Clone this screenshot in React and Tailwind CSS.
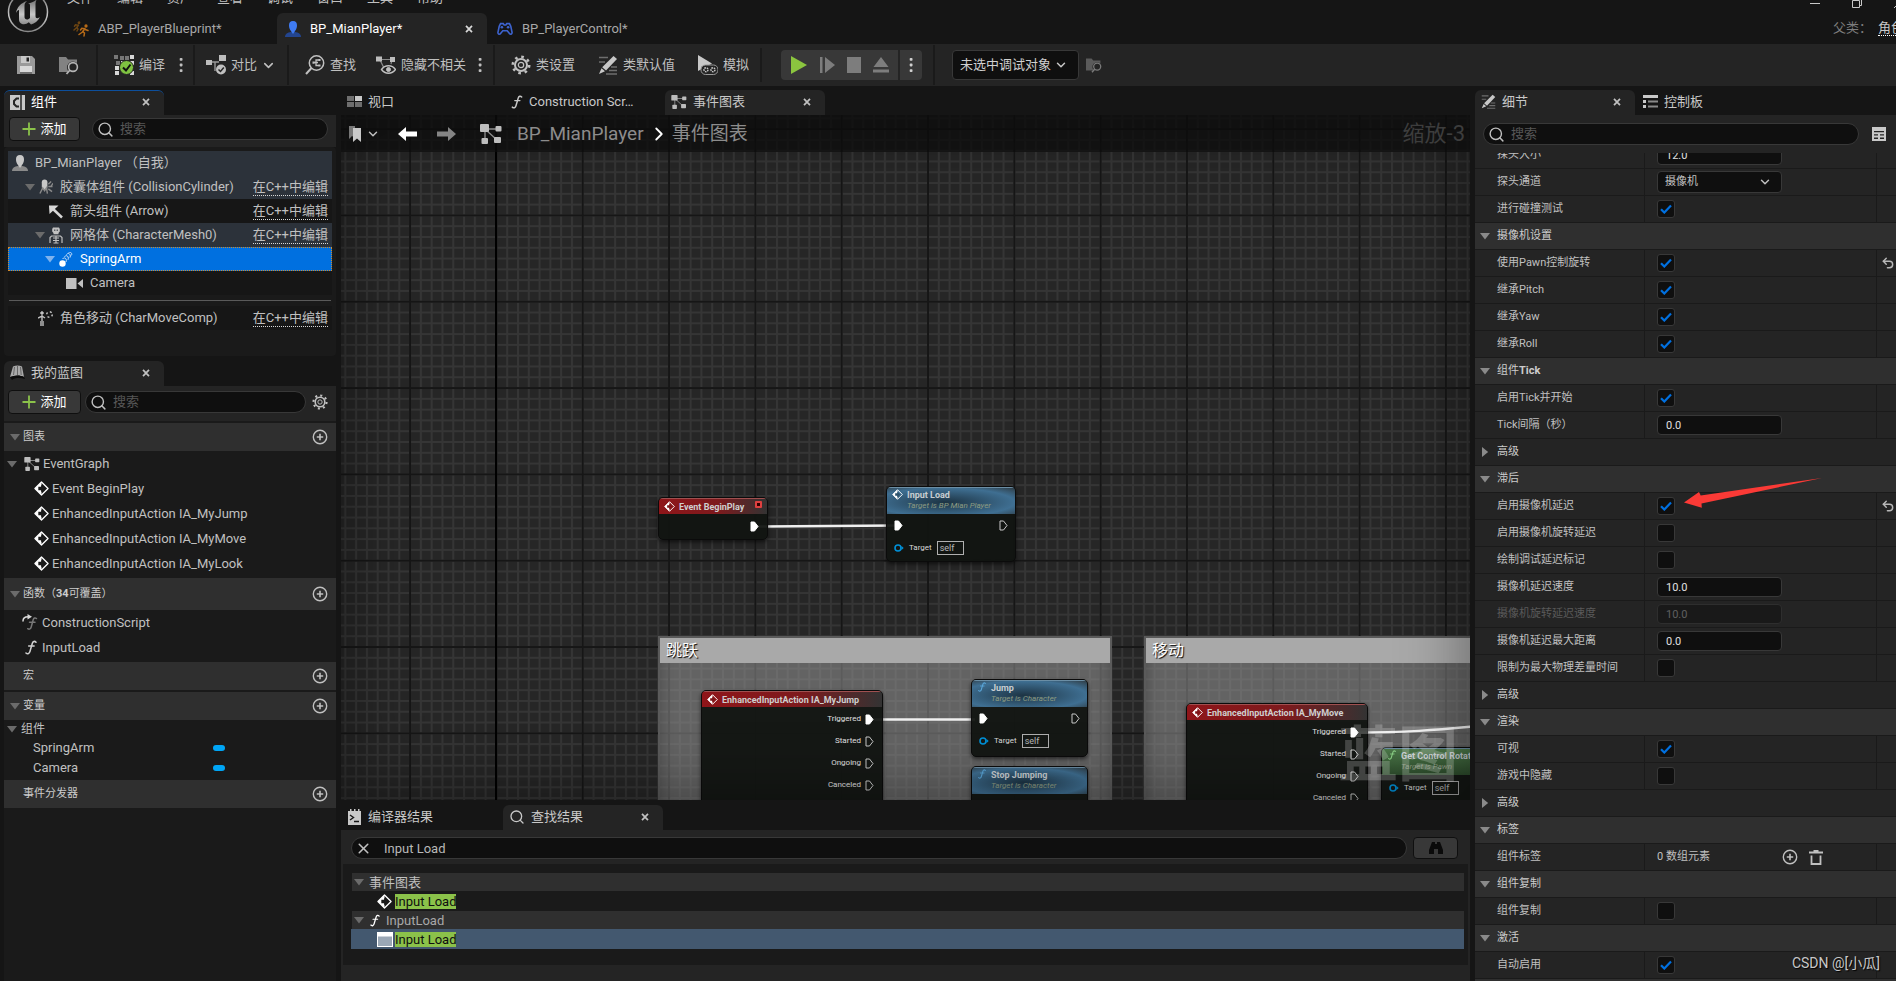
import React from "react";
import { Search, ChevronDown, ChevronRight, X, Undo2 } from "lucide-react";

/* ---------- small icons ---------- */

const CloseX = ({ className = "" }) => (
  <svg viewBox="0 0 8 8" className={"h-2 w-2 " + className} fill="none" stroke="currentColor" strokeWidth="1.7">
    <path d="M1 .8 7 7.2M7 .8 1 7.2" />
  </svg>
);

const Tri = ({ open = true, className = "text-[#6b6b6b]" }) => (
  <svg viewBox="0 0 10 10" className={"h-[10px] w-[10px] shrink-0 " + className} fill="currentColor">
    {open ? <path d="M0 2h10L5 8.4z" /> : <path d="M2 0v10l6.2-5z" />}
  </svg>
);

const Plus = () => (
  <svg viewBox="0 0 14 14" className="h-[14px] w-[14px]" stroke="#8bc24a" strokeWidth="1.8">
    <path d="M7 .5v13M.5 7h13" />
  </svg>
);

const CirclePlus = () => (
  <svg viewBox="0 0 16 16" className="h-4 w-4" fill="none" stroke="#c0c0c0">
    <circle cx="8" cy="8" r="6.7" strokeWidth="1.4" />
    <path d="M8 4.8v6.4M4.8 8h6.4" strokeWidth="1.6" />
  </svg>
);

const Dots = ({ className = "text-[#c0c0c0]" }) => (
  <svg viewBox="0 0 4 16" className={"h-4 w-1 " + className} fill="currentColor">
    <rect x=".7" y="1" width="2.8" height="2.8" rx=".8" />
    <rect x=".7" y="6.6" width="2.8" height="2.8" rx=".8" />
    <rect x=".7" y="12.2" width="2.8" height="2.8" rx=".8" />
  </svg>
);

const GraphIcon = ({ className = "h-[14px] w-[16px]" }) => (
  <svg viewBox="0 0 22 20" className={"shrink-0 " + className} fill="#bdbdbd" stroke="#bdbdbd">
    <path d="M5 5h12M5 5v11M6 6l11 10" fill="none" strokeWidth="1.3" stroke="#8f8f8f" />
    <g stroke="none">
      <rect x="0" y="0" width="9" height="8" rx="1" />
      <rect x="15.5" y="2" width="6" height="5.5" rx="1" />
      <rect x="14" y="13" width="7" height="6" rx="1" />
      <rect x="1.5" y="14" width="6.5" height="6" rx="1" />
    </g>
  </svg>
);

const EventIcon = ({ className = "h-[15px] w-[15px]", hole = "#1a1a1a" }) => (
  <svg viewBox="0 0 16 16" className={"shrink-0 " + className}>
    <path d="M8 1 15 8 8 15 1 8z" fill="none" stroke="#fff" strokeWidth="1.4" strokeLinejoin="round" />
    <path d="M8 1v14L1 8z" fill="#fff" />
    <path d="M4.6 6.2H7.6V3.9L11.4 8l-3.8 4.1V9.8h-3z" fill={hole} />
  </svg>
);

const FnIcon = ({ className = "h-[15px] w-[12px] text-[#d0d0d0]" }) => (
  <svg viewBox="0 0 12 15" className={"shrink-0 " + className} fill="none" stroke="currentColor" strokeWidth="1.6" strokeLinecap="round">
    <path d="M11 2.2C9.6.7 7.9 1.2 7.3 3.4L4.9 11.6C4.3 13.6 2.7 14.5 1 13" />
    <path d="M3.6 6h5.6" strokeWidth="1.3" />
  </svg>
);

const OverrideFnIcon = () => (
  <svg viewBox="0 0 16 17" className="h-[17px] w-4 shrink-0" fill="none" strokeLinecap="round">
    <path d="M1 7c0-3 2-4.3 5-4.3" stroke="#d8d8d8" strokeWidth="1.5" />
    <path d="M5.5 0 10 2.7 5.500 5.500z" fill="#d8d8d8" />
    <path d="M14.5 4.500c-1.500-1.200-2.800-.5-3.300 1.300l-2 7.200c-.5 1.800-1.800 2.800-3.500 1.700M7.500 8.300h5.500" stroke="#777" strokeWidth="1.5" />
  </svg>
);

const GearIcon = ({ className = "h-5 w-5" }) => (
  <svg viewBox="0 0 20 20" className={"shrink-0 " + className} fill="none" stroke="#c0c0c0">
    <circle cx="10" cy="10" r="6" strokeWidth="2" />
    <circle cx="10" cy="10" r="2.7" strokeWidth="1.2" />
    <circle cx="10" cy="10" r="8.2" strokeWidth="2.6" strokeDasharray="2.6 3.84" />
  </svg>
);

const PencilIcon = ({ className = "h-5 w-5" }) => (
  <svg viewBox="0 0 20 20" className={"shrink-0 " + className}>
    <path d="M1 2.5h9M1 7h6M13 12h6M11 15.5h8M8 19h11" stroke="#6e6e6e" strokeWidth="1.5" />
    <path d="M15.5 1 19 4 8 15.5 4.2 12.2z" fill="#c8c8c8" />
    <path d="M3.5 13.2 7 16.3 1 19z" fill="#c8c8c8" />
  </svg>
);

const PersonIcon = ({ head, body, className = "h-4 w-4" }) => (
  <svg viewBox="0 0 16 16" className={"shrink-0 " + className}>
    <path d="M0 16c0-3 2.5-4.5 6-5h4c3.5.5 6 2 6 5z" fill={body} />
    <path d="M8 0c2.8 0 4.2 2 4 4.8C11.8 8 10.2 10.8 8 10.8S4.200 8 4 4.8C3.800 2 5.200 0 8 0z" fill={head} />
    <path d="M6 10h4l-2 3z" fill={head} />
  </svg>
);

const UnrealLogo = () => (
  <svg viewBox="0 0 42 42" className="h-[42px] w-[42px]">
    <defs>
      <linearGradient id="ue" x1="0" y1="0" x2="0" y2="1">
        <stop offset="0" stopColor="#6f6f6f" />
        <stop offset=".6" stopColor="#c9c9c9" />
        <stop offset="1" stopColor="#8a8a8a" />
      </linearGradient>
    </defs>
    <circle cx="21" cy="21" r="19.5" fill="#161616" stroke="url(#ue)" strokeWidth="1.5" />
    <path
      d="M9 22c1-6 5-10 11-12-2 1.500-2.500 3-2.500 5v11c0 1.500 1 2.500 2.500 2.500 1.200 0 2.300-.6 3-1.500V14.500c0-1.500-.8-2-2-2.200 3-.3 7-1.800 9-4.300-1.300 2-1.500 4-1.500 6v11c0 1.500.6 2.200 1.800 2.200 1 0 2-.5 2.700-1.200C31 30 27.500 32.500 24 33.500l-2.200-2.200C20 33 17.500 33.700 15 33c-2-.7-3-2.200-3-4.500v-9c0-1.200-1.800-.2-3 2.500z"
      fill="url(#ue)"
    />
  </svg>
);

const RunnerIcon = () => (
  <svg viewBox="0 0 16 16" className="h-4 w-4" fill="none" strokeWidth="1.5" strokeLinecap="round">
    <g stroke="#6d4512">
      <circle cx="6" cy="1.8" r=".7" />
      <path d="M5.5 4 3.8 6.5 5 8 4 10M3.5 6.800 1 9M5 4.200 2.500 3.800 1.500 5.200" />
    </g>
    <g stroke="#b96c18">
      <circle cx="13" cy="5" r=".9" />
      <path d="M12 7.5 9.8 10.5 11.5 12 11 15M9.500 11 6 13.500M12 7.700 8.800 7.200 7.500 9M12.200 8.500 15 9.500" />
    </g>
  </svg>
);

const PadIcon = () => (
  <svg viewBox="0 0 18 14" className="h-[14px] w-[16px]">
    <path d="M4 1h3l1 1.500h2L11 1h3l1.500 3L17 11c0 2-2 2.500-3 1L11.500 9h-5L4 12c-1 1.500-3 1-3-1l1.500-7z" fill="none" stroke="#3d63cf" strokeWidth="1.8" />
    <circle cx="5.5" cy="5" r="1.5" fill="#3d63cf" />
    <circle cx="12.5" cy="5" r="1.5" fill="#3d63cf" />
  </svg>
);

const FolderFind = ({ className = "h-[20px] w-[20px] text-[#b5b5b5]" }) => (
  <svg viewBox="0 0 20 20" className={className}>
    <path d="M0 2h7l2 2.500h9V8a6 6 0 0 0-8 9H0z" fill="currentColor" opacity=".65" />
    <circle cx="14" cy="12" r="4.4" fill="#242424" stroke="currentColor" strokeWidth="1.6" />
    <path d="m11 15-3.500 4" stroke="currentColor" strokeWidth="1.8" />
  </svg>
);

/* ---------- controls ---------- */

function AddButton({ className = "" }) {
  return (
    <button className={"flex items-center justify-center gap-1 rounded border border-[#0f0f0f] bg-[#383838] text-[13px] leading-4 text-white " + className}>
      <Plus />
      添加
    </button>
  );
}

function SearchBox({ className = "", label }) {
  return (
    <label className={"flex h-[22px] items-center gap-1 rounded-full border border-[#383838] bg-[#0f0f0f] pl-1 " + className}>
      <Search className="h-[17px] w-[17px] shrink-0 text-[#c0c0c0]" strokeWidth={2} />
      <input type="text" aria-label={label} placeholder="搜索" className="h-full min-w-0 flex-1 bg-transparent pb-[2px] pl-[2px] text-[13px] leading-4 outline-none placeholder:text-[#575757]" />
    </label>
  );
}

function PanelTab({ icon, children, active, focus, width = "w-[160px]" }) {
  return (
    <div className={"flex h-[25px] shrink-0 items-center rounded-t-md px-[6px] pb-[2px] " + width + (active ? " bg-[#242424]" : "") + (focus ? " border-t border-[#0d4f9c]" : "")}>
      <button className="flex min-w-0 flex-1 items-center gap-[6px] text-left text-[13px] leading-4 whitespace-nowrap text-[#c8c8c8]">
        {icon}
        {children}
      </button>
      {active && (
        <button aria-label="关闭" className="mr-2 text-[#c0c0c0]">
          <CloseX />
        </button>
      )}
    </div>
  );
}

/* ---------- top ---------- */

const MENUS = ["文件", "编辑", "资产", "查看", "调试", "窗口", "工具", "帮助"];

function TopBar() {
  return (
    <header className="flex h-[44px] shrink-0 items-start">
      <div className="-mt-[9px] ml-[7px] w-[60px] shrink-0">
        <UnrealLogo />
      </div>
      <div className="flex min-w-0 flex-1 flex-col">
        <nav className="-mt-[10px] flex h-[23px] shrink-0 gap-6 text-[13px] leading-4 text-[#c0c0c0]">
          {MENUS.map((m) => (
            <button key={m} className="h-4">
              {m}
            </button>
          ))}
        </nav>
        <div className="flex h-[31px] text-[13px] leading-4 text-[#a8a8a8]">
          <button className="flex w-[210px] items-center gap-[9px] pl-[6px] whitespace-nowrap">
            <RunnerIcon />
            ABP_PlayerBlueprint*
          </button>
          <div className="flex w-[210px] items-center rounded-t-md bg-[#242424] pr-[14px] pl-2">
            <button className="flex flex-1 items-center gap-[9px] text-white">
              <PersonIcon head="#3f7bf2" body="#23458f" />
              BP_MianPlayer*
            </button>
            <button aria-label="关闭" className="text-[#d8d8d8]">
              <CloseX />
            </button>
          </div>
          <button className="flex items-center gap-[9px] pl-[10px] whitespace-nowrap">
            <PadIcon />
            BP_PlayerControl*
          </button>
        </div>
      </div>
      <div className="flex w-[90px] shrink-0 flex-col overflow-hidden">
        <div className="flex h-[18px] items-start gap-8 pl-1 text-[#c8c8c8]">
          <svg viewBox="0 0 10 8" className="h-2 w-[10px] shrink-0" stroke="currentColor">
            <path d="M0 3.500h10" />
          </svg>
          <svg viewBox="0 0 10 8" className="h-2 w-[10px] shrink-0" fill="none" stroke="currentColor">
            <path d="M.5 .5v7h7v-7zM9.500 0v5.500h-2" />
          </svg>
          <svg viewBox="0 0 10 8" className="h-2 w-[10px] shrink-0" stroke="currentColor">
            <path d="M0 8 8 0" />
          </svg>
        </div>
        <div className="flex pl-[27px] text-[13px] leading-5 whitespace-nowrap text-[#7d7d7d]">
          <span className="w-[45px] shrink-0">父类：</span>
          <a href="#parent" className="h-[18px] border-b border-dotted border-white text-[#c8c8c8]">
            角色
          </a>
        </div>
      </div>
    </header>
  );
}

const Divider = ({ className = "h-[40px]" }) => <span className={"w-[2px] shrink-0 bg-[#1a1a1a] " + className} />;

function ToolButton({ icon, children, className = "" }) {
  return (
    <button className={"flex shrink-0 items-center gap-[5px] text-[13px] leading-4 whitespace-nowrap text-[#c0c0c0] " + className}>
      {icon}
      {children}
    </button>
  );
}

function Toolbar() {
  return (
    <div className="flex h-[42px] shrink-0 items-center bg-[#242424]">
      <div className="flex w-[96px] shrink-0 items-center gap-6 pl-[17px]">
        <button aria-label="保存">
          <svg viewBox="0 0 18 18" className="h-[18px] w-[18px]">
            <path d="M0 0h15l3 3v15H0z" fill="#9a9a9a" />
            <path d="M4 0h9v7H4z" fill="#c8c8c8" />
            <path d="M9.500 1.500H12v4H9.500z" fill="#242424" />
            <path d="M3 10h12v6H3z" fill="#d8d8d8" />
            <path d="M3 16h12v2H3z" fill="#6e6e6e" />
          </svg>
        </button>
        <button aria-label="浏览">
          <FolderFind />
        </button>
      </div>
      <Divider />
      <div className="flex w-[95px] shrink-0 items-center gap-[14px] pl-4">
        <ToolButton
          icon={
            <svg viewBox="0 0 20 20" className="h-5 w-5">
              <g fill="#777">
                <path d="M0 0h4v4H0zM6 1h4v4H6zM11 1h4v4h-4zM2 6h4v4H2z" />
              </g>
              <g fill="#d8d8d8">
                <path d="M16 0h4v4h-4zM16 6h4v4h-4zM1 11h4v4H1zM1 16h4v4H1zM7 6h3v3H7zM16 16h4v4h-4z" />
              </g>
              <circle cx="12.5" cy="12.5" r="7" fill="#7fc241" stroke="#242424" />
              <path d="m9 12.500 3 3 4.500-6" fill="none" stroke="#111" strokeWidth="2" />
            </svg>
          }
        >
          编译
        </ToolButton>
        <button aria-label="编译选项">
          <Dots />
        </button>
      </div>
      <Divider />
      <div className="flex w-[92px] shrink-0 items-center pl-[11px]">
        <ToolButton
          icon={
            <svg viewBox="0 0 20 20" className="h-5 w-5">
              <path d="M4 7h9M9 7v9" stroke="#9a9a9a" strokeWidth="1.4" fill="none" />
              <path d="M0 5h6v5H0zM13 0h7v6h-7zM12 2h8" fill="#bdbdbd" />
              <circle cx="15" cy="14.5" r="5" fill="#c0c0c0" />
              <path d="m12.500 14.500 2 2 3.300-4" stroke="#242424" strokeWidth="1.5" fill="none" />
            </svg>
          }
        >
          对比
          <ChevronDown className="-ml-px h-[15px] w-[15px]" strokeWidth={2.5} />
        </ToolButton>
      </div>
      <Divider />
      <div className="flex w-[204px] shrink-0 items-center pl-4">
        <ToolButton
          className="w-[71px]"
          icon={
            <svg viewBox="0 0 20 20" className="h-5 w-5" fill="none" stroke="#c0c0c0">
              <circle cx="11.5" cy="8" r="7.2" strokeWidth="1.5" />
              <path d="m6.500 13-5.500 6" strokeWidth="2" />
              <path d="M9 7.500h4M11 7.500v3h3M11 7.500v-2.500h3" strokeWidth="1.3" />
              <path d="M7.500 6.500h2v2.200h-2zM13.500 4h2v2h-2zM13.500 9.500h2v2h-2z" fill="#c0c0c0" stroke="none" />
            </svg>
          }
        >
          查找
        </ToolButton>
        <ToolButton
          className="w-[102px]"
          icon={
            <svg viewBox="0 0 20 20" className="h-5 w-5" fill="none" stroke="#c0c0c0">
              <path d="M3 4.500h13M4 5l4 8M16 5l-1 4" strokeWidth="1.2" stroke="#8a8a8a" />
              <path d="M0 1.500h6v5H0zM14 2h5v5h-5z" fill="#bdbdbd" stroke="none" />
              <path d="M5.500 14.500c3.500-5 10.500-5 14 0-3.500 5-10.500 5-14 0z" strokeWidth="1.4" fill="#242424" />
              <circle cx="12.5" cy="14.5" r="2" fill="#c0c0c0" />
            </svg>
          }
        >
          隐藏不相关
        </ToolButton>
        <button aria-label="隐藏选项">
          <Dots />
        </button>
      </div>
      <Divider />
      <div className="flex w-[265px] shrink-0 items-center pl-4">
        <ToolButton className="w-[87px]" icon={<GearIcon />}>
          类设置
        </ToolButton>
        <ToolButton className="w-[100px]" icon={<PencilIcon />}>
          类默认值
        </ToolButton>
        <ToolButton
          icon={
            <svg viewBox="0 0 20 20" className="h-5 w-5">
              <path d="M0 0 14 8.500 0 16z" fill="#c8c8c8" />
              <rect x="3" y="10" width="17" height="9.5" rx="4.5" fill="#242424" stroke="#9a9a9a" strokeWidth="1" />
              <circle cx="8" cy="14.7" r="2" fill="none" stroke="#c8c8c8" strokeWidth="1.5" strokeDasharray="1.5 .8" />
              <circle cx="15" cy="14.7" r="2" fill="none" stroke="#c8c8c8" strokeWidth="1.5" strokeDasharray="1.5 .8" />
            </svg>
          }
        >
          模拟
        </ToolButton>
      </div>
      <Divider className="h-[34px]" />
      <div className="flex w-[171px] shrink-0 items-center pl-[19px]">
        <div className="flex h-[30px] items-center rounded bg-[#383838]">
          <div className="flex h-full w-[119px] items-center gap-3 border-r-2 border-[#242424] pl-[10px] text-[#7d7d7d]">
            <button aria-label="播放">
              <svg viewBox="0 0 16 18" className="h-[18px] w-4">
                <path d="M0 0 16 9 0 18z" fill="#8bc53f" />
              </svg>
            </button>
            <button aria-label="单步">
              <svg viewBox="0 0 16 16" className="h-4 w-4" fill="currentColor">
                <path d="M1 0h2.500v16H1zM6 0l10 8-10 8z" />
              </svg>
            </button>
            <button aria-label="停止" className="h-4 w-[14px] bg-[#7d7d7d]" />
            <button aria-label="弹出">
              <svg viewBox="0 0 16 16" className="h-4 w-4" fill="currentColor">
                <path d="M8 0l7.500 10H.5zM0 12.500h16V15.500H0z" />
              </svg>
            </button>
          </div>
          <button aria-label="播放选项" className="flex w-[22px] justify-center">
            <Dots className="text-[#d0d0d0]" />
          </button>
        </div>
      </div>
      <Divider />
      <div className="ml-[17px] grid w-[127px] shrink-0 items-center rounded border border-[#383838] bg-[#0f0f0f]">
        <select aria-label="调试对象" className="col-start-1 row-start-1 h-[28px] appearance-none bg-transparent pl-[7px] text-[13px] leading-4 text-[#d0d0d0] outline-none">
          <option>未选中调试对象</option>
        </select>
        <ChevronDown className="pointer-events-none col-start-1 row-start-1 mr-[10px] h-[14px] w-[14px] justify-self-end text-[#c8c8c8]" strokeWidth={2.5} />
      </div>
      <button aria-label="定位调试对象" className="ml-[7px]">
        <FolderFind className="h-4 w-4 text-[#7a7a7a]" />
      </button>
    </div>
  );
}

/* ---------- left ---------- */

const EditCpp = () => (
  <a href="#edit-cpp" className="ml-auto border-b border-dotted border-[#d8d8d8] text-[13px] leading-4 text-[#c0c0c0]">
    在C++中编辑
  </a>
);

function TreeRow({ indent, open, icon, children, cpp, tone = "", triTone = "text-[#6b6b6b]" }) {
  return (
    <li className={"flex h-6 items-center gap-[7px] pr-1 text-[13px] leading-4 whitespace-nowrap text-[#c0c0c0] " + indent + " " + tone}>
      {open && <Tri className={"-mr-[3px] " + triTone} />}
      {icon}
      <span>{children}</span>
      {cpp && <EditCpp />}
    </li>
  );
}

function ComponentsPanel() {
  return (
    <section>
      <div className="flex pt-1">
        <PanelTab
          active
          focus
          icon={
            <svg viewBox="0 0 15 15" className="h-[15px] w-[15px]">
              <path d="M0 0h15v15H0z" fill="#c8c8c8" />
              <path d="M9 3.500H6.500L4 6v3l2.500 2.500H9" fill="none" stroke="#242424" strokeWidth="2" />
              <path d="M11 0v15" stroke="#242424" strokeWidth="1.5" />
            </svg>
          }
        >
          <span className="text-white">组件</span>
        </PanelTab>
      </div>
      <div className="flex h-[32px] items-start gap-3 bg-[#242424] pt-[2px] pr-2 pl-[5px]">
        <AddButton className="h-[24px] w-[71px]" />
        <SearchBox label="搜索组件" className="mt-px flex-1" />
      </div>
      <div className="rounded bg-[#1a1a1a] px-1 pt-1 pb-[26px]">
        <ul>
          <TreeRow indent="pl-1" tone="bg-[#2c323a]" icon={<PersonIcon head="#c8c8c8" body="#8a8a8a" />}>
            BP_MianPlayer （自我）
          </TreeRow>
          <TreeRow
            indent="pl-[17px]"
            open
            cpp
            tone="bg-[#2c323a]"
            icon={
              <svg viewBox="0 0 15 16" className="h-4 w-[14px] shrink-0">
                <rect x="3" y="0" width="6" height="11" rx="3" fill="#c8c8c8" />
                <path d="M1 15 4 9l2 3 2-3 1 6M10 5l3-3M10 7.500h4.500M10 10l4 3M13 7l2-3" stroke="#8a8a8a" strokeWidth="1.5" fill="none" />
              </svg>
            }
          >
            胶囊体组件 (CollisionCylinder)
          </TreeRow>
          <TreeRow
            indent="pl-[40px]"
            cpp
            tone="bg-[#161616]"
            icon={
              <svg viewBox="0 0 15 15" className="h-[15px] w-[15px] shrink-0">
                <path d="m5 5 9 8.500" stroke="#d8d8d8" strokeWidth="2.5" />
                <path d="M1 1.500h9.500L1.500 10z" fill="#d8d8d8" />
              </svg>
            }
          >
            箭头组件 (Arrow)
          </TreeRow>
          <TreeRow
            indent="pl-[27px]"
            open
            cpp
            tone="bg-[#2c323a]"
            icon={
              <svg viewBox="0 0 14 17" className="h-[17px] w-[14px] shrink-0" fill="none" stroke="#c0c0c0">
                <path d="M4 .5h6l.8 1.500v2.500L9.500 6v1.200h-5V6L3.200 4.500V2z" fill="#c0c0c0" stroke="none" />
                <path d="M5.300 3.200h1M7.700 3.200h1" stroke="#2c323a" strokeWidth="1.6" />
                <path d="M1 16v-5.500l1.500-1.500h9l1.500 1.500V16M4 11h6M4 13.500h6M4.500 16h5M7 9v7" strokeWidth="1.2" />
              </svg>
            }
          >
            网格体 (CharacterMesh0)
          </TreeRow>
          <TreeRow
            indent="pl-[37px]"
            open
            triTone="text-[#7fb3ee]"
            tone="bg-[#0070e0] outline-1 -outline-offset-1 outline-dotted outline-[#d08a2c]"
            icon={
              <svg viewBox="0 0 14 15" className="h-[15px] w-[14px] shrink-0" fill="none">
                <path d="M3.500 7c1.500-2.500 5-.5 3.500 3M5.500 4.800c1.500-2.500 5-.5 3.500 3M7.500 2.600c1.500-2.500 5-.5 3.500 3M9.500.8c1.500-1.500 4 0 3 2.500" stroke="#cfe2f8" strokeWidth="1" />
                <circle cx="3.5" cy="11.5" r="3.2" fill="#fff" />
              </svg>
            }
          >
            <span className="text-white">SpringArm</span>
          </TreeRow>
          <TreeRow
            indent="pl-[58px]"
            tone="bg-[#161616]"
            icon={
              <svg viewBox="0 0 17 11" className="h-[11px] w-[17px] shrink-0" fill="#c0c0c0">
                <path d="M0 0h10.500v11H0zM11.500 5.500 17 1v9z" />
              </svg>
            }
          >
            Camera
          </TreeRow>
        </ul>
        <div className="mx-px mt-[5px] mb-[5px] h-px bg-[#5a5a5a]" />
        <ul>
          <TreeRow
            indent="pl-[30px]"
            cpp
            tone="bg-[#161616]"
            icon={
              <svg viewBox="0 0 15 15" className="h-[15px] w-[15px] shrink-0" fill="none" stroke="#c0c0c0">
                <circle cx="4" cy="2" r="1.3" fill="#c0c0c0" />
                <path d="M4 4v6M0 7l4-2 3 2M3 15v-5M5 15v-5" strokeWidth="1.4" />
                <circle cx="11.5" cy="3.5" r="2.8" strokeDasharray="2 2.4" strokeWidth="1.5" />
              </svg>
            }
          >
            角色移动 (CharMoveComp)
          </TreeRow>
        </ul>
      </div>
    </section>
  );
}

function BlueprintHeader({ children, open, height = "h-[28px]" }) {
  return (
    <div className={"flex items-center bg-[#2f2f2f] pr-2 pl-[6px] text-[11px] leading-4 text-[#cccccc] " + height}>
      <span className="w-[13px]">{open && <Tri />}</span>
      <span>{children}</span>
      <button aria-label="添加" className="ml-auto">
        <CirclePlus />
      </button>
    </div>
  );
}

function BlueprintPanel() {
  return (
    <section className="flex min-h-0 flex-1 flex-col">
      <div className="flex shrink-0 pt-[5px]">
        <PanelTab
          active
          icon={
            <svg viewBox="0 0 15 15" className="h-[15px] w-[15px]">
              <path d="M0 12 3 1.500c3-1.500 6-1.500 9 0L14 12c-4-2-9-2-14 0z" fill="#a8a8a8" />
              <path d="M0 12c5-2 10-2 14 0l1 2c-5-1.500-10-1.500-13 1z" fill="#0a0a0a" />
              <path d="m4.500 2-1 8M7.500 1v9M10.500 2l.7 8" stroke="#666" />
            </svg>
          }
        >
          我的蓝图
        </PanelTab>
      </div>
      <div className="flex h-[35px] shrink-0 items-start gap-1 bg-[#242424] pt-1 pr-2 pl-1">
        <AddButton className="h-[24px] w-[73px]" />
        <SearchBox label="搜索蓝图" className="mt-px flex-1" />
        <button aria-label="设置" className="mt-1 ml-[2px]">
          <GearIcon className="h-4 w-4" />
        </button>
      </div>
      <div className="flex min-h-0 flex-1 flex-col bg-[#1a1a1a] pt-[2px]">
        <BlueprintHeader open>图表</BlueprintHeader>
        <ul className="flex flex-col pb-[2px] text-[13px] leading-[25px] text-[#c0c0c0]">
          <li className="flex items-center gap-[3px] pl-[3px] whitespace-nowrap">
            <Tri className="mr-1 text-[#6b6b6b]" />
            <GraphIcon />
            EventGraph
          </li>
          {["Event BeginPlay", "EnhancedInputAction IA_MyJump", "EnhancedInputAction IA_MyMove", "EnhancedInputAction IA_MyLook"].map((t) => (
            <li key={t} className="flex items-center gap-[3px] pl-[30px] whitespace-nowrap">
              <EventIcon />
              {t}
            </li>
          ))}
        </ul>
        <BlueprintHeader open height="h-[32px]">
          函数（<b>34</b>可覆盖）
        </BlueprintHeader>
        <ul className="flex flex-col pb-[2px] text-[13px] leading-[25px] text-[#c0c0c0]">
          <li className="flex items-center gap-1 pl-[18px]">
            <OverrideFnIcon />
            ConstructionScript
          </li>
          <li className="flex items-center gap-[5px] pl-[21px]">
            <FnIcon />
            InputLoad
          </li>
        </ul>
        <BlueprintHeader>宏</BlueprintHeader>
        <div className="h-[2px]" />
        <BlueprintHeader open>变量</BlueprintHeader>
        <ul className="pb-[2px] text-[13px] leading-5 text-[#c0c0c0]">
          <li className="flex items-center gap-1 pl-[3px] text-[12px] leading-[18px]">
            <Tri />
            组件
          </li>
          {["SpringArm", "Camera"].map((v) => (
            <li key={v} className="flex items-center pl-[29px]">
              <span className="w-[180px]">{v}</span>
              <span className="h-[6px] w-3 rounded-full bg-[#00a5f5]" />
            </li>
          ))}
        </ul>
        <BlueprintHeader>事件分发器</BlueprintHeader>
      </div>
    </section>
  );
}

/* ---------- graph canvas ---------- */

const ExecPin = ({ on }) => (
  <svg viewBox="0 0 9 11" className="h-[11px] w-[9px] shrink-0">
    <path d="M1 1h3.500L8 5.500 4.500 10H1z" fill={on ? "#fff" : "none"} stroke={on ? "#fff" : "#c8c8c8"} strokeLinejoin="round" />
  </svg>
);

const TargetPin = () => (
  <div className="flex items-center gap-[5px]">
    <svg viewBox="0 0 10 8" className="h-2 w-[10px]">
      <circle cx="4" cy="4" r="3" fill="none" stroke="#0091d8" strokeWidth="1.6" />
      <path d="M7.500 2 9.700 4 7.500 6z" fill="#0091d8" />
    </svg>
    <span className="text-[8px] leading-[10px] text-[#d8d8d8]">Target</span>
    <span className="flex h-[14px] w-[27px] items-center border border-[#b0b0b0] pl-[2px] text-[9px] leading-[10px] text-[#b8b8b8]">self</span>
  </div>
);

const NODE = "absolute overflow-hidden rounded-[5px] border border-[#0b0b0b] bg-[#111411]/95 shadow-[0_2px_4px_rgba(0,0,0,0.6)]";

function EventNode({ pos, title, pins }) {
  return (
    <article className={NODE + " " + pos}>
      <div className="flex h-4 items-center gap-1 border-t border-[#a05050] bg-[linear-gradient(90deg,#8f1519_0%,#7d1a1d_55%,#333_100%)] pl-[5px] text-[9px] leading-3 font-bold whitespace-nowrap text-[#cfcfcf]">
        <EventIcon className="h-[11px] w-[11px]" hole="#7d1518" />
        {title}
      </div>
      <ul className="flex flex-col pt-px pr-2">
        {pins.map((p, i) => (
          <li key={p} className="flex h-[22px] items-center justify-end gap-1 text-[8px] leading-[10px] text-[#e0e0e0]">
            {p}
            <ExecPin on={i === 0} />
          </li>
        ))}
      </ul>
    </article>
  );
}

function CallNode({ pos, icon, title, sub, tone = "bg-[radial-gradient(ellipse_at_45%_55%,#1d3444_0%,#3f6f92_70%,#2f3d46_100%)]", exec = true }) {
  return (
    <article className={NODE + " " + pos}>
      <div className={"flex h-[27px] gap-1 border-t border-[#6b8ea5] pt-px pl-[5px] " + tone}>
        {icon}
        <div className="whitespace-nowrap">
          <div className="text-[9px] leading-3 font-bold text-[#c8ced2]">{title}</div>
          <div className="text-[8px] leading-[10px] text-[#8d9c82] italic">{sub}</div>
        </div>
      </div>
      {exec && (
        <div className="flex h-[23px] items-center justify-between px-[7px]">
          <ExecPin on />
          <ExecPin />
        </div>
      )}
      <div className={exec ? "px-[7px] pt-1" : "px-[7px] pt-[6px]"}>
        <TargetPin />
      </div>
    </article>
  );
}

const blueFn = <FnIcon className="h-[10px] w-[10px] text-[#5aa6d8]" />;

function Comment({ pos, title }) {
  return (
    <div className={"absolute border-2 border-[#5a5a5a] bg-[#a0a0a0]/50 shadow-[inset_0_0_14px_rgba(0,0,0,0.25)] " + pos}>
      <h3 className="flex h-[25px] items-center bg-[#a9a9a9] pl-[6px] text-[16px] leading-5 text-white [text-shadow:1px_1px_1px_#000]">{title}</h3>
    </div>
  );
}

function GraphCanvas() {
  return (
    <div className="relative min-h-0 flex-1 overflow-hidden bg-[#262626]">
      <svg className="absolute inset-0 h-full w-full">
        <defs>
          <pattern id="minor" x="68.1" y="13.1" width="10.79" height="10.79" patternUnits="userSpaceOnUse">
            <path d="M0 1h10.790M1 0v10.790" stroke="#353535" strokeWidth="2" />
          </pattern>
          <pattern id="major" x="68.1" y="13.1" width="86.32" height="86.32" patternUnits="userSpaceOnUse">
            <path d="M0 1h86.320M1 0v86.320" stroke="#161616" strokeWidth="2" />
          </pattern>
        </defs>
        <rect width="100%" height="100%" fill="url(#minor)" />
        <rect width="100%" height="100%" fill="url(#major)" />
        <path d="M155 0v700" stroke="#000" strokeWidth="2" />
      </svg>

      <Comment pos="left-[317px] top-[521px] h-[200px] w-[454px]" title="跳跃" />
      <Comment pos="left-[803px] top-[521px] h-[200px] w-[400px]" title="移动" />

      <svg className="absolute inset-0 h-full w-full" fill="none" stroke="#f0f0f0" strokeWidth="2.5">
        <path d="M412 411.500 556 410.500M528 604.500H634" />
        <path d="M1013 617.500c50 0 80-2 130-7" />
      </svg>

      <EventNode pos="left-[317px] top-[382px] h-[43px] w-[110px]" title="Event BeginPlay" pins={[""]} />
      <span className="absolute top-[386px] left-[414px] h-[7px] w-[7px] rounded-[1px] border-2 border-[#e04040] bg-[#300]" />
      <CallNode pos="left-[545px] top-[371px] h-[76px] w-[130px]" icon={<EventIcon className="h-[11px] w-[11px]" hole="#2d526b" />} title="Input Load" sub="Target is BP Mian Player" />

      <EventNode pos="left-[360px] top-[575px] h-[160px] w-[182px]" title="EnhancedInputAction IA_MyJump" pins={["Triggered", "Started", "Ongoing", "Canceled"]} />
      <CallNode pos="left-[630px] top-[564px] h-[78px] w-[117px]" icon={blueFn} title="Jump" sub="Target is Character" />
      <CallNode pos="left-[630px] top-[651px] h-[78px] w-[117px]" icon={blueFn} title="Stop Jumping" sub="Target is Character" />

      <EventNode pos="left-[845px] top-[588px] h-[160px] w-[182px]" title="EnhancedInputAction IA_MyMove" pins={["Triggered", "Started", "Ongoing", "Canceled"]} />
      <CallNode
        pos="left-[1040px] top-[632px] h-[80px] w-[130px]"
        icon={<FnIcon className="h-[10px] w-[10px] text-[#8fd68a]" />}
        title="Get Control Rotation"
        sub="Target is Pawn"
        exec={false}
        tone="bg-[linear-gradient(180deg,#4d7a4a_0%,#2f4f2e_100%)]"
      />

      <div className="pointer-events-none absolute inset-0 shadow-[inset_0_0_70px_rgba(0,0,0,0.45)]" />
      <div className="pointer-events-none absolute right-3 bottom-1 text-[60px] leading-[80px] font-bold text-white/20">蓝图</div>

      <div className="absolute inset-x-0 top-0 flex h-[37px] items-center bg-[#0c0c0c]/75 text-[19px] leading-6 text-[#8c8c8c]">
        <button aria-label="书签" className="flex w-[47px] items-center gap-[5px] pl-2 text-[#c0c0c0]">
          <svg viewBox="0 0 12 16" className="h-4 w-3">
            <path d="M0 0h6v12l-3-2-3 3z" fill="#777" />
            <path d="M4 2h8v14l-4-3.500L4 16z" fill="#c8c8c8" />
          </svg>
          <ChevronDown className="h-[14px] w-[14px]" strokeWidth={2.5} />
        </button>
        <button aria-label="后退" className="ml-[10px]">
          <svg viewBox="0 0 19 14" className="h-[14px] w-[19px]" fill="#fff">
            <path d="M0 7 8 0v4.500h11v5H8V14z" />
          </svg>
        </button>
        <button aria-label="前进" className="ml-5">
          <svg viewBox="0 0 19 14" className="h-[14px] w-[19px]" fill="#858585">
            <path d="M19 7 11 0v4.500H0v5h11V14z" />
          </svg>
        </button>
        <GraphIcon className="ml-6 h-5 w-[22px]" />
        <a href="#blueprint" className="ml-[15px]">
          BP_MianPlayer
        </a>
        <ChevronRight className="mr-[2px] ml-1 h-[22px] w-[22px] text-white" strokeWidth={2} />
        <span>事件图表</span>
        <span className="mr-[5px] ml-auto text-[22px] text-[#3d3d3d]">缩放-3</span>
      </div>
    </div>
  );
}

function GraphTabs() {
  return (
    <div className="flex h-[29px] shrink-0 pt-1">
      <PanelTab
        width="w-[164px]"
        icon={
          <svg viewBox="0 0 15 11" className="h-[11px] w-[15px]">
            <path d="M0 0h7v5H0zM0 6h7v5H0z" fill="#6e6e6e" />
            <path d="M8 0h7v5H8z" fill="#c8c8c8" />
            <path d="M8 6h7v5H8z" fill="#6e6e6e" />
          </svg>
        }
      >
        视口
      </PanelTab>
      <PanelTab width="w-[160px]" icon={<FnIcon className="h-[14px] w-3 text-[#c8c8c8]" />}>
        Construction Scr…
      </PanelTab>
      <PanelTab active icon={<GraphIcon />}>
        事件图表
      </PanelTab>
    </div>
  );
}

function FindResults() {
  const mark = "bg-[#8bc24a] text-[#0f0f0f]";
  return (
    <section className="shrink-0">
      <div className="flex pt-[5px]">
        <PanelTab
          width="w-[162px]"
          icon={
            <svg viewBox="0 0 13 16" className="h-4 w-[15px]">
              <path d="M0 2h2V0h1.500v2H6V0h1.500v2H10V0h1.500v2H13v14H0z" fill="#c8c8c8" />
              <path d="m2 6 3.500 2.500L2 11M6 12.500h5" fill="none" stroke="#151515" strokeWidth="1.4" />
            </svg>
          }
        >
          编译器结果
        </PanelTab>
        <PanelTab active icon={<Search className="h-4 w-4" />}>
          查找结果
        </PanelTab>
      </div>
      <div className="bg-[#242424] px-[2px] pt-[7px] pb-4">
        <div className="flex gap-[6px] pr-[10px] pl-2">
          <label className="flex h-[22px] flex-1 items-center rounded-full border border-[#383838] bg-[#0f0f0f] pl-[3px]">
            <X className="h-[17px] w-[17px]" strokeWidth={2.2} />
            <input aria-label="查找" defaultValue="Input Load" className="h-full min-w-0 flex-1 bg-transparent pl-3 text-[13px] leading-4 text-[#b8b8b8] outline-none" />
          </label>
          <button aria-label="在所有蓝图中查找" className="flex h-[22px] w-[45px] items-center justify-center rounded border border-[#0f0f0f] bg-[#383838]">
            <svg viewBox="0 0 14 12" className="h-3 w-[14px]" fill="#0a0a0a">
              <path d="M3 0h3v2h2V0h3l3 8v4H9V7H5v5H0V8z" />
            </svg>
          </button>
        </div>
        <div className="mt-[5px] bg-[#1a1a1a] pt-[9px] pr-1 pb-4 pl-2 text-[13px] leading-[15px] text-[#a8a8a8]">
          <ul className="flex flex-col">
            <li className="ml-px flex h-[18px] items-center gap-[5px] bg-[#2f2f2f] pl-[2px]">
              <Tri />
              <span className="text-[#c0c0c0]">事件图表</span>
            </li>
            <li className="flex h-5 items-center gap-[3px] pl-[26px]">
              <EventIcon />
              <mark className={mark}>Input Load</mark>
            </li>
            <li className="ml-px flex h-[18px] items-center gap-[6px] bg-[#2f2f2f] pl-[2px]">
              <Tri />
              <FnIcon className="h-[13px] w-[10px] text-white" />
              InputLoad
            </li>
            <li className="flex h-5 items-center gap-[2px] bg-[#43586f] pl-[26px]">
              <svg viewBox="0 0 16 15" className="h-[15px] w-4">
                <path d="M0 0h16v15H0z" fill="#fff" />
                <path d="M1 4.500h14V14H1z" fill="#9aa7b5" />
              </svg>
              <mark className={mark}>Input Load</mark>
            </li>
          </ul>
        </div>
      </div>
    </section>
  );
}

/* ---------- details ---------- */

const DETAILS = [
  { label: "探头大小", value: "12.0" },
  { label: "探头通道", select: "摄像机" },
  { label: "进行碰撞测试", check: true },
  { head: "摄像机设置" },
  { label: "使用Pawn控制旋转", check: true, undo: true },
  { label: "继承Pitch", check: true },
  { label: "继承Yaw", check: true },
  { label: "继承Roll", check: true },
  {
    head: (
      <>
        组件<b>Tick</b>
      </>
    ),
  },
  { label: "启用Tick并开始", check: true },
  { label: "Tick间隔（秒）", value: "0.0" },
  { more: "高级" },
  { head: "滞后" },
  { label: "启用摄像机延迟", check: true, undo: true, arrow: true },
  { label: "启用摄像机旋转延迟", check: false },
  { label: "绘制调试延迟标记", check: false },
  { label: "摄像机延迟速度", value: "10.0" },
  { label: "摄像机旋转延迟速度", value: "10.0", disabled: true },
  { label: "摄像机延迟最大距离", value: "0.0" },
  { label: "限制为最大物理差量时间", check: false },
  { more: "高级" },
  { head: "渲染" },
  { label: "可视", check: true },
  { label: "游戏中隐藏", check: false },
  { more: "高级" },
  { head: "标签" },
  { label: "组件标签", array: "0 数组元素" },
  { head: "组件复制" },
  { label: "组件复制", check: false },
  { head: "激活" },
  { label: "自动启用", check: true },
];

function CheckBox({ id, checked }) {
  return (
    <span className="grid h-[18px] w-[18px] place-items-center">
      <input id={id} type="checkbox" defaultChecked={checked} className="peer col-start-1 row-start-1 h-[18px] w-[18px] appearance-none rounded-[3px] border border-[#383838] bg-[#0f0f0f]" />
      <svg viewBox="0 0 12 10" className="pointer-events-none invisible col-start-1 row-start-1 h-[10px] w-3 peer-checked:visible" fill="none" stroke="#0070e0" strokeWidth="2.2">
        <path d="M1 5.200 4.300 8.500 11 1.500" />
      </svg>
    </span>
  );
}

function DetailRow({ row, id }) {
  if (row.head || row.more)
    return (
      <div className={"flex h-[27px] items-center gap-[7px] border-b border-[#1a1a1a] pl-[5px] text-[11px] leading-4 text-[#cccccc] " + (row.head ? "bg-[#2f2f2f]" : "bg-[#242424]")}>
        <Tri open={!!row.head} className="text-[#8a8a8a]" />
        <span>{row.head || row.more}</span>
      </div>
    );
  const box = "rounded border border-[#383838] bg-[#0f0f0f] text-[11px] leading-4 outline-none";
  return (
    <div className="relative flex h-[27px] border-b border-[#1a1a1a] bg-[#242424] text-[11px] leading-4">
      <label htmlFor={id} className={"flex w-[170px] shrink-0 items-center border-r border-[#1a1a1a] pl-[22px] " + (row.disabled ? "text-[#5a5a5a]" : "text-[#c0c0c0]")}>
        {row.label}
      </label>
      <div className="flex min-w-0 flex-1 items-center border-r border-[#1a1a1a] pl-3 text-[#c0c0c0]">
        {"check" in row && <CheckBox id={id} checked={row.check} />}
        {row.value && (
          <input
            id={id}
            defaultValue={row.value}
            disabled={row.disabled}
            className={box + " h-5 w-[125px] pl-2 " + (row.disabled ? "text-[#9a9a9a] opacity-50" : "text-[#e0e0e0]")}
          />
        )}
        {row.select && (
          <span className="grid w-[125px] items-center">
            <select id={id} className={box + " col-start-1 row-start-1 h-[22px] appearance-none pl-[7px]"}>
              <option>{row.select}</option>
            </select>
            <ChevronDown className="pointer-events-none col-start-1 row-start-1 mr-[10px] h-[14px] w-[14px] justify-self-end" strokeWidth={2.5} />
          </span>
        )}
        {row.array && (
          <>
            <span id={id} className="w-[125px]">
              {row.array}
            </span>
            <button aria-label="添加元素">
              <CirclePlus />
            </button>
            <button aria-label="删除元素" className="ml-[11px]">
              <svg viewBox="0 0 14 15" className="h-[15px] w-[14px]" fill="none" stroke="#c0c0c0" strokeWidth="1.8">
                <path d="M0 2.500h14M4.500 1h5M2.500 5.500v8.500h9V5.500" />
              </svg>
            </button>
          </>
        )}
      </div>
      <div className="flex w-[19px] shrink-0 items-center pl-1 text-[#b8b8b8]">
        {row.undo && (
          <button aria-label="重置">
            <Undo2 className="h-[14px] w-[14px]" strokeWidth={2.5} />
          </button>
        )}
      </div>
      {row.arrow && (
        <svg viewBox="0 0 138 30" className="pointer-events-none absolute -top-[15px] left-[209px] h-[30px] w-[138px]">
          <path d="M0 24.500 15 14l1.700 3.500L138 0 17.500 25.500l.3 4.200z" fill="#fb3a36" />
        </svg>
      )}
    </div>
  );
}

function DetailsPanel() {
  return (
    <aside className="flex w-[421px] shrink-0 flex-col">
      <div className="flex h-[29px] shrink-0 pt-1">
        <PanelTab active icon={<PencilIcon className="h-[15px] w-[15px]" />}>
          细节
        </PanelTab>
        <PanelTab
          icon={
            <svg viewBox="0 0 15 13" className="ml-[2px] h-[13px] w-[15px]" fill="#c8c8c8">
              <path d="M0 0h15v3H0zM0 5h3v3H0zM0 10h3v3H0z" />
              <path d="M5 5.500h10v2H5zM5 10.500h10v2H5z" fill="#8a8a8a" />
            </svg>
          }
        >
          控制板
        </PanelTab>
      </div>
      <div className="flex h-[38px] shrink-0 items-start gap-[13px] bg-[#242424] pt-2 pr-[10px] pl-2">
        <SearchBox label="搜索细节" className="flex-1" />
        <button aria-label="属性矩阵" className="mt-1">
          <svg viewBox="0 0 14 14" className="h-[14px] w-[14px]">
            <path d="M0 0h14v14H0z" fill="#c8c8c8" />
            <path d="M2 4h10v1.300H2zM2 7.200h4v1.300H2zM8 7.200h4v1.300H8zM2 10.500h4v1.500H2zM8 10.500h4v1.500H8z" fill="#242424" />
          </svg>
        </button>
      </div>
      <div className="min-h-0 flex-1 overflow-hidden">
        <div className="-mt-[11px]">
          {DETAILS.map((row, i) => (
            <DetailRow key={i} row={row} id={"prop-" + i} />
          ))}
          <div className="h-[27px] bg-[#2f2f2f]" />
        </div>
      </div>
    </aside>
  );
}

export default function App() {
  return (
    <div className="relative flex h-screen flex-col overflow-hidden bg-[#151515] font-['Roboto','Noto_Sans_CJK_SC',sans-serif] text-[#c0c0c0]">
      <TopBar />
      <Toolbar />
      <main className="flex min-h-0 flex-1 gap-[5px] pl-1">
        <div className="flex w-[332px] shrink-0 flex-col">
          <ComponentsPanel />
          <BlueprintPanel />
        </div>
        <div className="flex min-w-0 flex-1 flex-col">
          <GraphTabs />
          <GraphCanvas />
          <FindResults />
        </div>
        <DetailsPanel />
      </main>
      <div className="pointer-events-none absolute right-4 bottom-[9px] text-[14px] leading-[18px] text-[#c8c8c8] [text-shadow:1px_1px_1px_#000]">CSDN @[小瓜]</div>
    </div>
  );
}
